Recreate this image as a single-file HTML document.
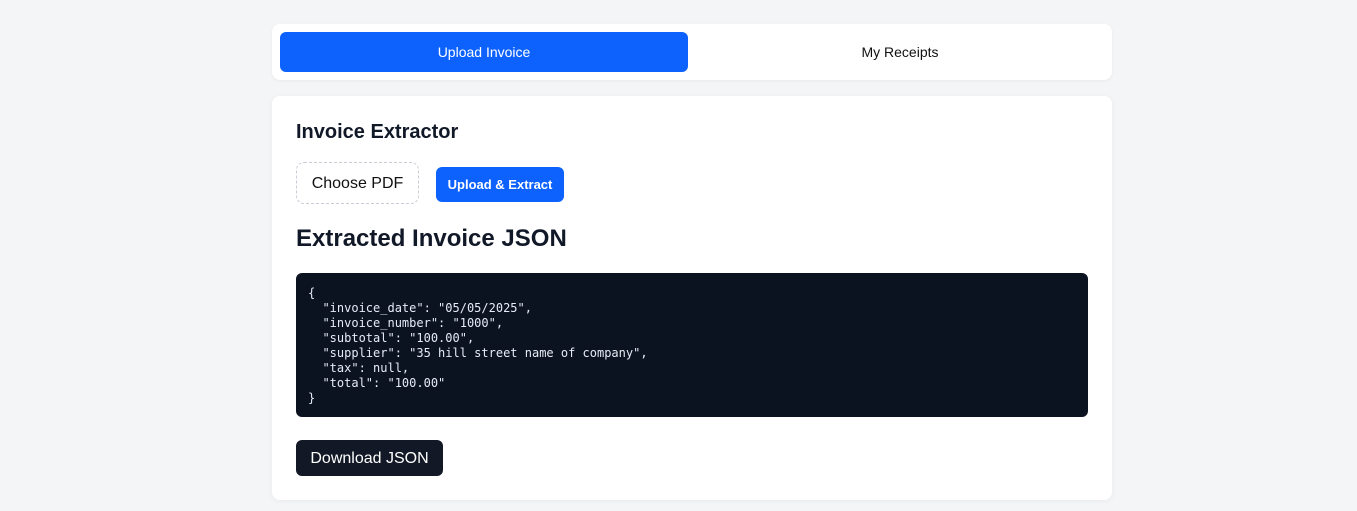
<!DOCTYPE html>
<html><head><style>
body{margin:0;background:#f4f5f7;font-family:"Liberation Sans",sans-serif;width:1357px;height:511px;overflow:hidden;position:relative}
.tabs{position:absolute;left:272px;top:24px;width:840px;height:56px;background:#fff;border-radius:8px;box-shadow:0 1px 3px rgba(0,0,0,.05)}
.tab{position:absolute;top:8px;height:40px;width:408px;line-height:40px;text-align:center;font-size:14px;border-radius:6px;color:#111}
.t1{left:8px;background:#0d62fe;color:#fff}
.t2{left:424px}
.card{position:absolute;left:272px;top:96px;width:840px;height:404px;background:#fff;border-radius:8px;box-shadow:0 1px 6px rgba(0,0,0,.05)}
h2{position:absolute;left:24px;top:25px;margin:0;font-size:20px;font-weight:bold;color:#111827}
.choose{position:absolute;left:24px;top:66px;width:121px;height:40px;border:1px dashed #c9cdd6;border-radius:8px;font-size:16px;line-height:42px;text-align:center;color:#111}
.up{position:absolute;left:164px;top:71px;width:128px;height:35px;background:#0d62fe;border-radius:6px;color:#fff;font-size:13px;font-weight:bold;line-height:35px;text-align:center}
h1{position:absolute;left:24px;top:129px;margin:0;font-size:24px;font-weight:bold;color:#111827}
pre{position:absolute;left:24px;top:177px;width:768px;height:120px;margin:0;padding:13px 12px 11px;background:#0b1220;border-radius:6px;color:#e6ecf5;font-family:"DejaVu Sans Mono",monospace;font-size:12px;line-height:15px}
.dl{position:absolute;left:24px;top:344px;width:147px;height:36px;background:#121826;border-radius:6px;color:#fff;font-size:16px;line-height:38px;text-align:center}
</style></head><body>
<div class="tabs"><div class="tab t1">Upload Invoice</div><div class="tab t2">My Receipts</div></div>
<div class="card">
<h2>Invoice Extractor</h2>
<div class="choose">Choose PDF</div>
<div class="up">Upload &amp; Extract</div>
<h1>Extracted Invoice JSON</h1>
<pre>{
  "invoice_date": "05/05/2025",
  "invoice_number": "1000",
  "subtotal": "100.00",
  "supplier": "35 hill street name of company",
  "tax": null,
  "total": "100.00"
}</pre>
<div class="dl">Download JSON</div>
</div>
</body></html>
